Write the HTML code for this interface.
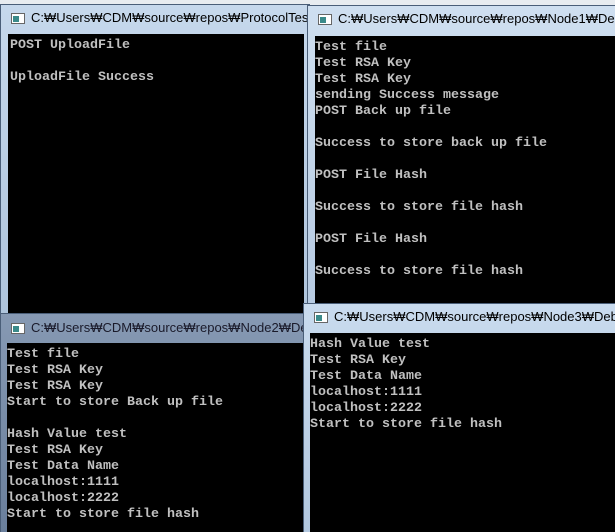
<!DOCTYPE html><html style="overflow:hidden"><head><style>
html,body{margin:0;width:615px;height:532px;overflow:hidden}
body{background:#dfe6ee;position:relative;font-family:"Liberation Sans","Noto Sans CJK KR",sans-serif}
.w{position:absolute;background:#b9cde3;border:1px solid #4a5e78;box-sizing:border-box;overflow:hidden}
.t{position:absolute;left:30px;font-size:13px;color:#000;white-space:nowrap;top:5px}
.ic{position:absolute;left:10px;top:8px;width:14px;height:11px;background:#fff;border:1px solid #666;box-sizing:border-box}
.ic:after{content:"";position:absolute;left:1px;top:2px;width:6px;height:6px;background:#3a8a8a}
.c{position:absolute;background:#000;color:#c0c0c0;font-family:"Liberation Mono",monospace;font-weight:bold;font-size:13.33px;line-height:16px;white-space:pre;padding:4px 2px;box-sizing:border-box;overflow:hidden}
</style></head><body>
<div style="position:absolute;left:0;top:0;width:615px;height:7px;background:#e8ecf0"></div>
<div class="w" style="left:0;top:4px;width:310px;height:320px;background:linear-gradient(#c6d8ec,#aec4dc)"><div class="ic"></div><div class="t">C:₩Users₩CDM₩source₩repos₩ProtocolTest4₩Debug</div>
<div class="c" style="left:7px;top:29px;width:296px;height:290px">POST UploadFile

UploadFile Success</div></div>
<div class="w" style="left:307px;top:5px;width:308px;height:300px;border-right:none;background:linear-gradient(#cfdff0,#b7cbe2)"><div class="ic"></div><div class="t">C:₩Users₩CDM₩source₩repos₩Node1₩Debug₩Node1</div>
<div class="c" style="left:7px;top:30px;width:301px;height:270px;padding-left:0">Test file
Test RSA Key
Test RSA Key
sending Success message
POST Back up file

Success to store back up file

POST File Hash

Success to store file hash

POST File Hash

Success to store file hash</div></div>
<div class="w" style="left:0;top:313px;width:310px;height:219px;border-bottom:none;background:linear-gradient(#8699b3,#6a7f9c)"><div class="ic" style="top:9px"></div><div class="t" style="top:6px;color:#1a1a2a">C:₩Users₩CDM₩source₩repos₩Node2₩Debug₩Node2</div>
<div class="c" style="left:6px;top:29px;width:296px;height:200px;padding-left:0">Test file
Test RSA Key
Test RSA Key
Start to store Back up file

Hash Value test
Test RSA Key
Test Data Name
localhost:1111
localhost:2222
Start to store file hash</div></div>
<div class="w" style="left:303px;top:303px;width:312px;height:229px;border-right:none;border-bottom:none;background:linear-gradient(#c9dbee,#b2c7df)"><div class="ic"></div><div class="t">C:₩Users₩CDM₩source₩repos₩Node3₩Debug₩Node3</div>
<div class="c" style="left:6px;top:29px;width:306px;height:200px;padding-left:0">Hash Value test
Test RSA Key
Test Data Name
localhost:1111
localhost:2222
Start to store file hash</div></div>
</body></html>
